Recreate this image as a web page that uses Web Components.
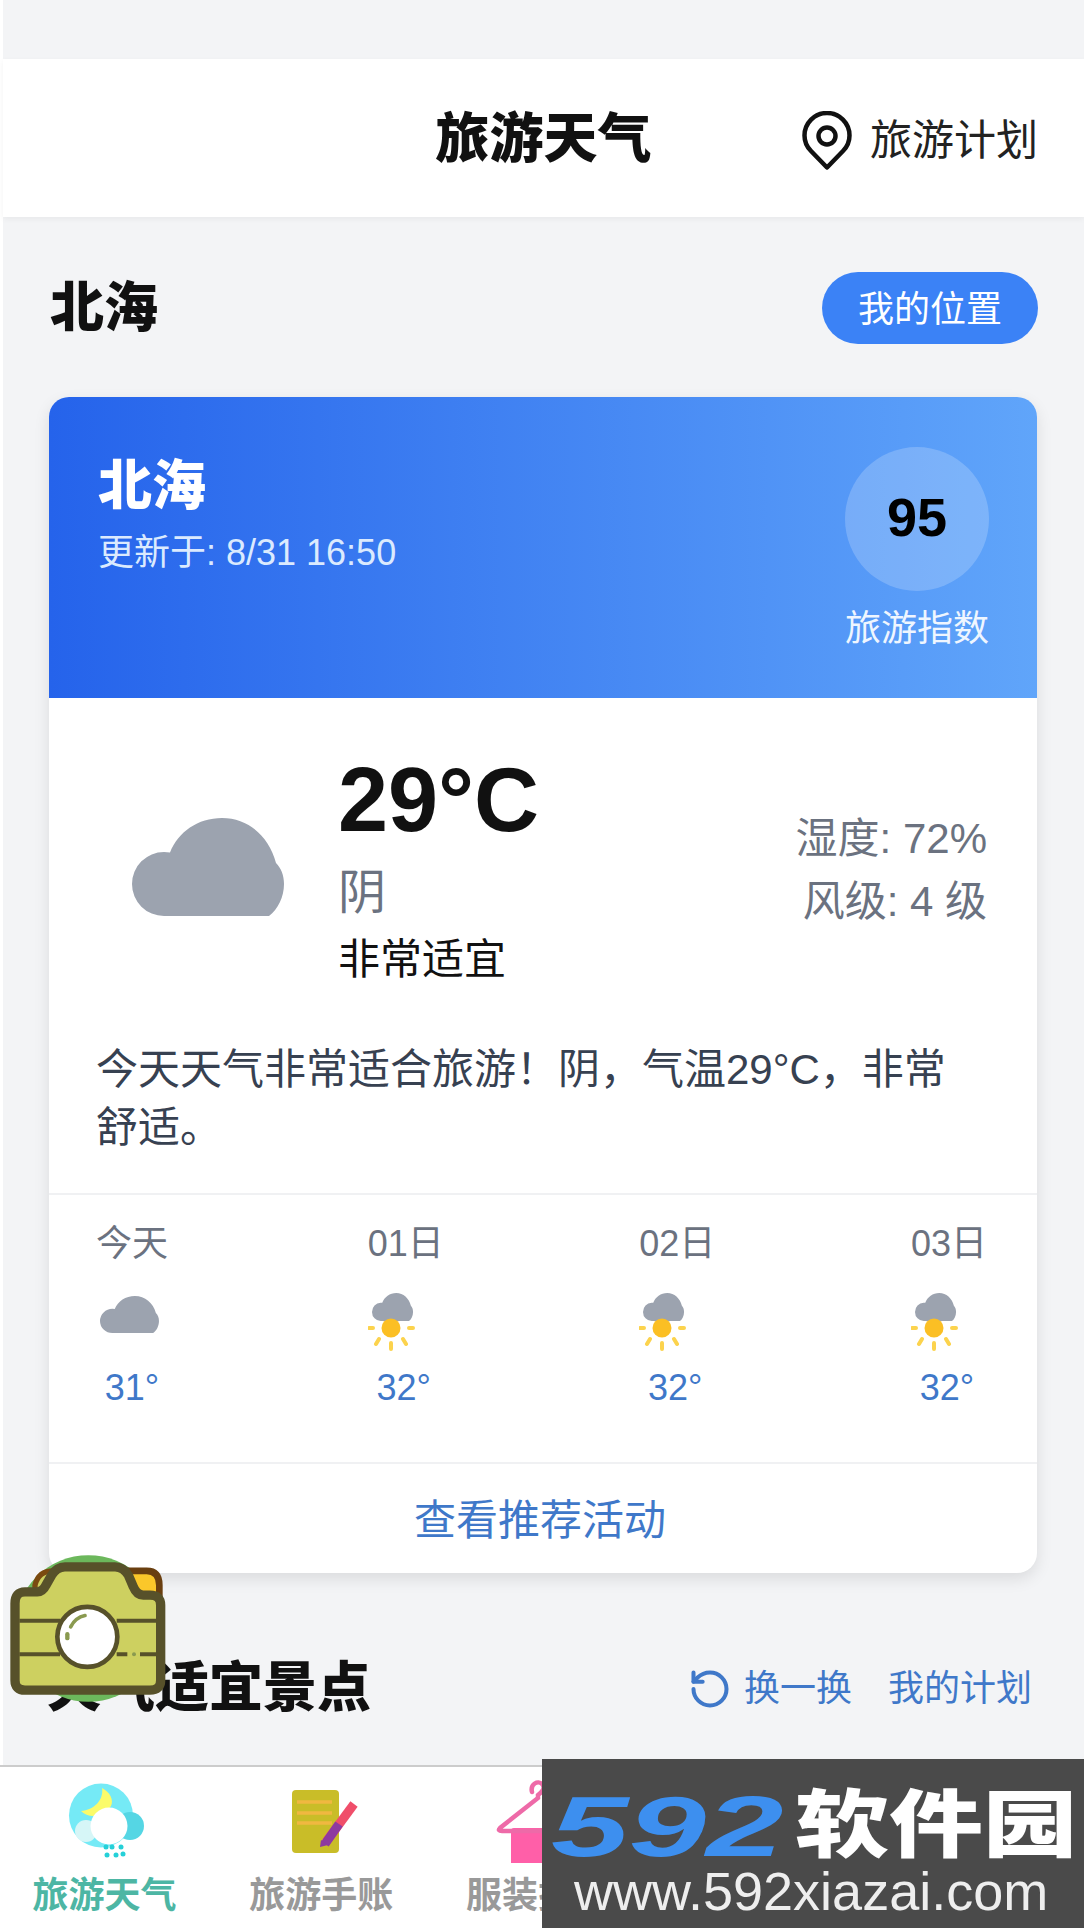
<!DOCTYPE html>
<html lang="zh">
<head>
<meta charset="utf-8">
<title>旅游天气</title>
<style>
  html, body { margin: 0; padding: 0; background: #fff; }
  body { font-family: "Liberation Sans", "Noto Sans CJK SC", sans-serif; color: #111; }
</style>
</head>
<body>
<travel-app>
  <app-header slot="header" plan="旅游计划">旅游天气</app-header>

  <city-bar slot="main" button="我的位置">北海</city-bar>

  <weather-card slot="main" city="北海" updated="更新于: 8/31 16:50" score="95" temp="29°C"
                sky="阴" comfort="非常适宜" humidity="湿度: 72%" wind="风级: 4 级">
    今天天气非常适合旅游！阴，气温29°C，非常舒适。
    <forecast-day slot="forecast" label="今天" temp="31°" icon="cloud"></forecast-day>
    <forecast-day slot="forecast" label="01日" temp="32°" icon="sun"></forecast-day>
    <forecast-day slot="forecast" label="02日" temp="32°" icon="sun"></forecast-day>
    <forecast-day slot="forecast" label="03日" temp="32°" icon="sun"></forecast-day>
  </weather-card>

  <section-head slot="main">天气适宜景点</section-head>

  <tab-bar slot="nav">
    <tab-item icon="weather" active>旅游天气</tab-item>
    <tab-item icon="notes">旅游手账</tab-item>
    <tab-item icon="clothes">服装搭配</tab-item>
  </tab-bar>

  <camera-badge slot="over"></camera-badge>
  <site-mark slot="over"></site-mark>
</travel-app>

<script>
const CLOUD = 'M32 98A32 32 0 0 1 32 34Q35 34 38 34.500C46 14 66 0 90 0C116 0 137 18 144 45C149 50 152 57 152 66C152 79 146 91 137 98Z';

class TravelApp extends HTMLElement {
  constructor() {
    super();
    this.attachShadow({ mode: 'open' });
    this.shadowRoot.innerHTML = `
      <style>
      :host { display: flex; flex-direction: column; position: relative; height: 1928px; width: 1084px; overflow: hidden; background: #fff; }
      .page { flex: 1; display: flex; flex-direction: column; margin-left: 3px; background: #f3f4f6; padding-top: 59px; min-height: 0; }
      .main { flex: 1; padding: 55px 47px 0 46px; min-height: 0; }
      </style>
      <div class="page">
        <slot name="header"></slot>
        <div class="main"><slot name="main"></slot></div>
      </div>
      <slot name="nav"></slot>
      <slot name="over"></slot>
    `;
  }
}
customElements.define('travel-app', TravelApp);

class AppHeader extends HTMLElement {
  constructor() {
    super();
    this.attachShadow({ mode: 'open' });
    this.shadowRoot.innerHTML = `
      <style>
      :host { display: grid; grid-template-columns: 1fr auto 1fr; align-items: center; height: 158px; background: #fff; box-shadow: 0 2px 6px rgba(0,0,0,.05); position: relative; }
      .title { grid-column: 2; font-size: 54px; font-weight: 900; color: #111; line-height: 64px; padding-top: 2px; }
      .plan { grid-column: 3; justify-self: end; display: flex; align-items: center; gap: 18px; padding: 6px 46px 0 0; font-size: 42px; color: #222; line-height: 50px; }
      svg { display: block; width: 50px; height: 60px; margin-top: -1px; }
      </style>
      <div class="title"><slot></slot></div>
      <div class="plan">
        <svg viewBox="0 0 50 60" fill="none" stroke="#111" stroke-width="4.500">
          <path d="M25 56.500L9 40C4 35 2.500 30 2.500 24.500A22.500 22.500 0 0 1 47.500 24.500C47.500 30 46 35 41 40Z" stroke-linejoin="round"/>
          <circle cx="25" cy="25" r="8.500"/>
        </svg>
        <span>${this.getAttribute('plan')}</span>
      </div>
    `;
  }
}
customElements.define('app-header', AppHeader);

class CityBar extends HTMLElement {
  constructor() {
    super();
    this.attachShadow({ mode: 'open' });
    this.shadowRoot.innerHTML = `
      <style>
      :host { display: flex; justify-content: space-between; align-items: center; height: 72px; margin-bottom: 53px; margin-right: -1px; }
      .name { font-size: 54px; font-weight: 900; line-height: 64px; margin-left: 1px; }
      .btn { height: 72px; line-height: 76px; padding: 0 36px; margin-left: -1px; border-radius: 36px; background: #3b82f6; color: #fff; font-size: 36px; }
      </style>
      <div class="name"><slot></slot></div>
      <div class="btn">${this.getAttribute('button')}</div>
    `;
  }
}
customElements.define('city-bar', CityBar);

class WeatherCard extends HTMLElement {
  constructor() {
    super();
    this.attachShadow({ mode: 'open' });
    const a = n => this.getAttribute(n);
    this.shadowRoot.innerHTML = `
      <style>
      :host { display: block; border-radius: 20px; background: #fff; box-shadow: 0 6px 16px rgba(0,0,0,.1); }
      .top { display: flex; justify-content: space-between; height: 301px; box-sizing: border-box; padding: 50px 48px 0 49px; border-radius: 20px 20px 0 0; background: linear-gradient(90deg, #2563eb, #60a5fa); color: #fff; }
      .city { margin-top: 7px; font-size: 54px; font-weight: 900; line-height: 65px; }
      .updated { margin-top: 12px; font-size: 36px; line-height: 43px; color: #dbeafe; }
      .index { display: flex; flex-direction: column; align-items: center; }
      .circle { width: 144px; height: 144px; box-sizing: border-box; padding-bottom: 4px; border-radius: 50%; background: rgba(255,255,255,.2); display: flex; align-items: center; justify-content: center; color: #000; font-size: 54px; font-weight: 700; }
      .index span { margin-top: 16px; font-size: 36px; line-height: 44px; color: #eff6ff; }
      .now { display: flex; align-items: center; padding: 52px 50px 0 83px; }
      .now svg { display: block; width: 152px; height: 98px; fill: #9ca3af; margin-right: 54px; }
      .temp { font-size: 90px; font-weight: 700; line-height: 100px; color: #111; }
      .sky { font-size: 48px; line-height: 86px; color: #6b7280; }
      .comfort { font-size: 42px; line-height: 48px; color: #111; }
      .side { margin-left: auto; padding-top: 6px; text-align: right; font-size: 42px; line-height: 63px; color: #6b7280; }
      .desc { margin: 57px 50px 36px 47px; font-size: 42px; line-height: 58px; color: #374151; }
      .days { display: flex; justify-content: space-between; padding: 27px 54px 52px 47px; border-top: 2px solid #f0f1f3; border-bottom: 2px solid #f0f1f3; }
      .more { height: 109px; line-height: 113px; text-align: center; font-size: 42px; color: #3f78c9; padding-right: 6px; }
      </style>
      <div class="top">
        <div>
          <div class="city">${a('city')}</div>
          <div class="updated">${a('updated')}</div>
        </div>
        <div class="index">
          <div class="circle">${a('score')}</div>
          <span>旅游指数</span>
        </div>
      </div>
      <div class="now">
        <svg viewBox="0 0 152 98"><path d="${CLOUD}"/></svg>
        <div>
          <div class="temp">${a('temp')}</div>
          <div class="sky">${a('sky')}</div>
          <div class="comfort">${a('comfort')}</div>
        </div>
        <div class="side">
          <div>${a('humidity')}</div>
          <div>${a('wind')}</div>
        </div>
      </div>
      <div class="desc"><slot></slot></div>
      <div class="days"><slot name="forecast"></slot></div>
      <div class="more">查看推荐活动</div>
    `;
  }
}
customElements.define('weather-card', WeatherCard);

class ForecastDay extends HTMLElement {
  constructor() {
    super();
    this.attachShadow({ mode: 'open' });
    let icon;
    if (this.getAttribute('icon') === 'cloud') {
      icon = `<path d="${CLOUD}" fill="#9ca3af" transform="translate(4 6) scale(.388 .378)"/>`;
    } else {
      icon = `
        <path d="${CLOUD}" fill="#9ca3af" transform="translate(4 3) scale(.27 .286)"/>
        <circle cx="23" cy="38" r="9.500" fill="#fbbf24"/>
        <g stroke="#fcd34d" stroke-width="4" stroke-linecap="round">
          <path d="M1 38H5M41 38H45M11 49L8 54M35 49L38 54M23 53V59"/>
        </g>`;
    }
    this.shadowRoot.innerHTML = `
      <style>
      :host { display: block; width: 72px; }
      .label { font-size: 36px; line-height: 44px; color: #6b7280; text-align: center; white-space: nowrap; }
      svg { display: block; width: 72px; height: 68px; margin-top: 24px; }
      .temp { margin-top: 8px; font-size: 36px; line-height: 44px; color: #3f78c9; text-align: center; white-space: nowrap; }
      </style>
      <div class="label">${this.getAttribute('label')}</div>
      <svg viewBox="0 0 72 68">${icon}</svg>
      <div class="temp">${this.getAttribute('temp')}</div>
    `;
  }
}
customElements.define('forecast-day', ForecastDay);

class SectionHead extends HTMLElement {
  constructor() {
    super();
    this.attachShadow({ mode: 'open' });
    this.shadowRoot.innerHTML = `
      <style>
      :host { display: flex; align-items: center; justify-content: space-between; height: 60px; margin: 84px 5px 0 -2px; }
      .title { font-size: 54px; font-weight: 900; line-height: 60px; color: #111; padding-top: 2px; }
      .actions { display: flex; align-items: center; padding-top: 4px; font-size: 36px; color: #3f78c9; line-height: 44px; }
      svg { display: block; width: 44px; height: 44px; margin-right: 12px; }
      .mine { margin-left: 36px; }
      </style>
      <div class="title"><slot></slot></div>
      <div class="actions">
        <svg viewBox="0 0 24 24" fill="none" stroke="#3f78c9" stroke-width="2.200" stroke-linecap="round" stroke-linejoin="round">
          <path d="M3 12a9 9 0 1 0 9-9 9.750 9.750 0 0 0-6.740 2.740L3 8"/>
          <path d="M3 3v5h5"/>
        </svg>
        <span>换一换</span>
        <span class="mine">我的计划</span>
      </div>
    `;
  }
}
customElements.define('section-head', SectionHead);

class TabBar extends HTMLElement {
  constructor() {
    super();
    this.attachShadow({ mode: 'open' });
    this.shadowRoot.innerHTML = `
      <style>
      :host { display: grid; grid-template-columns: repeat(5, 216.800px); height: 161px; margin-left: -4px; border-top: 2px solid #ccc; background: #fff; }
      </style>
      <slot></slot>
    `;
  }
}
customElements.define('tab-bar', TabBar);

const TAB_ICONS = {
  weather: `<svg viewBox="0 0 100 90">
      <circle cx="47" cy="35.500" r="32" fill="#75eaf6"/>
      <path d="M27 31C40 30 50 20 48 8C56 12 60 20 57 26C50 36 36 40 27 31Z" fill="#fbfb6a"/>
      <circle cx="76" cy="46" r="14" fill="#55d6e4"/>
      <circle cx="32" cy="51" r="11" fill="#d6f6f7"/>
      <circle cx="55" cy="46" r="18.500" fill="#fff"/>
      <g fill="#25d0d8"><circle cx="52" cy="67" r="2.500"/><circle cx="58" cy="67" r="2.500"/><circle cx="67" cy="67" r="2.500"/><circle cx="53" cy="75" r="2.500"/><circle cx="62" cy="75" r="2.500"/><circle cx="69" cy="74" r="2.500"/></g>
    </svg>`,
  notes: `<svg viewBox="0 0 100 90">
      <g transform="translate(4 0)">
        <rect x="17" y="10" width="47" height="63" rx="4" fill="#c9bd28"/>
        <path d="M22 22H57M22 33H57M22 43H57" stroke="#f0b840" stroke-width="3.500"/>
        <path d="M51 62L79 24" stroke="#f04e6a" stroke-width="9"/>
        <path d="M50 64L64 44" stroke="#8e3aa0" stroke-width="9"/>
        <path d="M45 67L46 60L53 65Z" fill="#8e3aa0"/>
      </g>
    </svg>`,
  clothes: `<svg viewBox="0 0 100 90">
      <path d="M26 48H74A3 3 0 0 1 77 51V83H23V51A3 3 0 0 1 26 48Z" fill="#ff5fa8"/>
      <path d="M44 12C42 4 50 0 54 4C58 8 54 12 50 15V18L12 48C10 50 11 51 14 51H88" fill="none" stroke="#ee6aa8" stroke-width="4.500" stroke-linecap="round"/>
    </svg>`
};

class TabItem extends HTMLElement {
  constructor() {
    super();
    this.attachShadow({ mode: 'open' });
    const color = this.hasAttribute('active') ? '#4db6a4' : '#999';
    this.shadowRoot.innerHTML = `
      <style>
      :host { display: flex; flex-direction: column; align-items: center; padding-top: 13px; overflow: visible; }
      svg { display: block; width: 100px; height: 90px; }
      .text { margin-top: 6px; font-size: 36px; font-weight: 700; line-height: 40px; color: ${color}; white-space: nowrap; }
      </style>
      ${TAB_ICONS[this.getAttribute('icon')]}
      <div class="text"><slot></slot></div>
    `;
  }
}
customElements.define('tab-item', TabItem);

// sticker lying over the page, drawn in its own 510x500 box
class CameraBadge extends HTMLElement {
  constructor() {
    super();
    this.attachShadow({ mode: 'open' });
    this.shadowRoot.innerHTML = `
      <style>
      :host { display: block; position: absolute; left: 0; top: 1540px; width: 170px; height: 167px; }
      svg { display: block; width: 170px; height: 167px; }
      </style>
      <svg viewBox="0 0 510 500">
        <circle cx="265" cy="265" r="220" fill="#6cb85c"/>
        <path d="M105 170V135Q115 92 160 92H200V170Z" fill="#cdd060" stroke="#7a4a10" stroke-width="16"/>
        <path d="M360 92H440Q478 92 478 135V170H400Z" fill="#fbc72a" stroke="#6a3f10" stroke-width="20" stroke-linejoin="round"/>
        <path d="M75 155H112Q128 155 138 135L155 105Q170 80 195 80H345Q370 80 385 105L400 140Q410 165 430 165H450Q482 165 482 195V420Q482 450 450 450H75Q45 450 45 420V190Q45 155 75 155Z" fill="#cdd060" stroke="#57512a" stroke-width="28" stroke-linejoin="round"/>
        <path d="M58 242H180M350 242H470M58 342H180M350 342H382M420 342H470" stroke="#57512a" stroke-width="12"/>
        <circle cx="402" cy="342" r="6" fill="#8a9a50"/>
        <circle cx="262" cy="290" r="90" fill="#fff" stroke="#57512a" stroke-width="14"/>
        <path d="M212 260Q226 232 255 226" fill="none" stroke="#8a9a50" stroke-width="11" stroke-linecap="round"/>
        <path d="M202 282V294" fill="none" stroke="#8a9a50" stroke-width="13" stroke-linecap="round"/>
      </svg>
    `;
  }
}
customElements.define('camera-badge', CameraBadge);

class SiteMark extends HTMLElement {
  constructor() {
    super();
    this.attachShadow({ mode: 'open' });
    this.shadowRoot.innerHTML = `
      <style>
      :host { display: block; position: absolute; right: 0; bottom: 0; width: 542px; height: 169px; background: #4a4a4a; overflow: hidden; }
      .logo { display: flex; align-items: center; height: 68px; margin: 33px 0 0 9px; }
      .num { width: 244px; font-size: 86px; line-height: 68px; font-weight: 700; font-style: italic; color: #3d8fef; display: inline-block; transform: scaleX(1.62); transform-origin: left center; white-space: nowrap; }
      .cn { font-size: 74px; line-height: 68px; font-weight: 900; color: #fff; display: inline-block; transform: scaleX(1.27); transform-origin: left center; white-space: nowrap; }
      .url { margin: 1px 0 0 32px; font-size: 54px; line-height: 60px; color: #eee; white-space: nowrap; }
      </style>
      <div class="logo"><span class="num">592</span><span class="cn">软件园</span></div>
      <div class="url">www.592xiazai.com</div>
    `;
  }
}
customElements.define('site-mark', SiteMark);
</script>
</body>
</html>
